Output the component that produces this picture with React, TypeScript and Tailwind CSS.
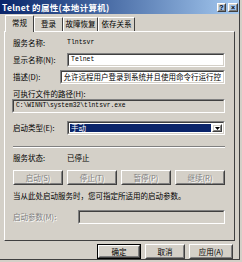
import React from "react";

function Sunken({ className = "", inner = "bg-white", children }: { className?: string; inner?: string; children?: React.ReactNode }) {
  return (
    <div className={`border border-t-[#808080] border-l-[#808080] border-b-white border-r-white ${className}`}>
      <div className={`h-full border border-t-[#404040] border-l-[#404040] border-b-[#d4d0c8] border-r-[#d4d0c8] flex items-center px-[2px] overflow-hidden whitespace-nowrap ${inner}`}>
        {children}
      </div>
    </div>
  );
}

function Raised({ className = "", children, disabled = false }: { className?: string; children?: React.ReactNode; disabled?: boolean }) {
  return (
    <div className={`border border-t-white border-l-white border-b-[#404040] border-r-[#404040] ${className}`}>
      <div
        className={`h-full border border-t-[#d4d0c8] border-l-[#d4d0c8] border-b-[#808080] border-r-[#808080] flex items-center justify-center ${
          disabled ? "text-[#808080] [text-shadow:1px_1px_0_#ffffff]" : "text-black"
        }`}
      >
        {children}
      </div>
    </div>
  );
}

function Tab({ label, selected = false, className = "" }: { label: string; selected?: boolean; className?: string }) {
  if (selected) {
    return (
      <div className={`h-[17px] -mb-[1px] relative z-10 bg-[#d4d0c8] border-t border-l border-t-white border-l-white border-r border-r-[#404040] rounded-t-[1px] flex items-start justify-center pt-[3px] ${className}`}>
        {label}
      </div>
    );
  }
  return (
    <div className={`h-[14px] border-t border-l border-t-white border-l-white border-r border-r-[#404040] rounded-t-[1px] flex items-start justify-center pt-[2px] ${className}`}>
      {label}
    </div>
  );
}

export default function App() {
  return (
    <div className="w-[242px] h-[262px] bg-[#d4d0c8] overflow-hidden font-['Noto_Sans_CJK_SC',sans-serif] text-[7.5px] leading-none text-black">
      <div className="w-[240px] h-[260px] border-r border-b border-r-[#404040] border-b-[#404040] flex flex-col">
        {/* title bar */}
        <div className="h-[14px] w-[239px] flex items-center bg-linear-to-r from-[#0a246a] to-[#a6caf0] pl-[2px] pr-[1px]">
          <span className="text-white font-bold text-[8.5px] tracking-[0.3px]">Telnet 的属性(本地计算机)</span>
          <div className="ml-auto flex gap-[2px]">
            <Raised className="w-[9px] h-[9px]">
              <span className="text-[7px] font-bold font-['Liberation_Sans',sans-serif] leading-none">?</span>
            </Raised>
            <Raised className="w-[10px] h-[9px]">
              <span className="text-[7px] font-bold font-['Liberation_Sans',sans-serif] leading-none">×</span>
            </Raised>
          </div>
        </div>

        {/* tabs */}
        <div className="mt-[1px] h-[16px] flex items-end pl-[5px]">
          <Tab label="常规" selected className="w-[29px]" />
          <Tab label="登录" className="w-[29px]" />
          <Tab label="故障恢复" className="w-[35px]" />
          <Tab label="依存关系" className="w-[37px]" />
        </div>

        {/* panel */}
        <div className="ml-[4px] w-[231px] h-[210px] border border-t-white border-l-white border-b-[#404040] border-r-[#404040] flex flex-col pl-[8px] pr-[9px]">
          <div className="mt-[6px] h-[10px] flex items-center">
            <span className="w-[54px]">服务名称:</span>
            <span className="font-['Liberation_Mono',monospace] text-[6.5px]">Tlntsvr</span>
          </div>

          <div className="mt-[5px] h-[14px] flex items-center">
            <span className="w-[54px]">显示名称(N):</span>
            <Sunken className="flex-1 h-[14px]">
              <span className="font-['Liberation_Mono',monospace] text-[6.5px]">Telnet</span>
            </Sunken>
          </div>

          <div className="mt-[3px] h-[14px] flex items-center">
            <span className="w-[54px]">描述(D):</span>
            <Sunken className="flex-1 h-[14px]">
              <span>允许远程用户登录到系统并且使用命令行运行控</span>
            </Sunken>
          </div>

          <div className="mt-[5px] h-[9px] flex items-center">可执行文件的路径(H):</div>

          <Sunken className="mt-[1px] -ml-[1px] h-[14px]" inner="bg-[#d4d0c8]">
            <span className="font-['Liberation_Mono',monospace] text-[6.3px]">C:\WINNT\system32\tlntsvr.exe</span>
          </Sunken>

          <div className="mt-[8px] h-[14px] flex items-center">
            <span className="w-[54px]">启动类型(E):</span>
            <div className="flex-1 h-[14px] border border-t-[#808080] border-l-[#808080] border-b-white border-r-white">
              <div className="h-full border border-t-[#404040] border-l-[#404040] border-b-[#d4d0c8] border-r-[#d4d0c8] bg-white flex items-stretch p-[1px]">
                <div className="flex-1 bg-[#0a246a] text-white flex items-center pl-[1px]">手动</div>
                <Raised className="w-[10px] ml-[1px]">
                  <svg width="5" height="3" viewBox="0 0 5 3">
                    <path d="M0 0H5L2.5 3Z" fill="#000" />
                  </svg>
                </Raised>
              </div>
            </div>
          </div>

          <div className="mt-[11px] h-[2px] border-t border-t-[#808080] border-b border-b-white" />

          <div className="mt-[5px] h-[10px] flex items-center">
            <span className="w-[54px]">服务状态:</span>
            <span>已停止</span>
          </div>

          <div className="mt-[7px] h-[15px] flex gap-[4px]">
            <Raised className="flex-1" disabled>启动(S)</Raised>
            <Raised className="flex-1" disabled>停止(T)</Raised>
            <Raised className="flex-1" disabled>暂停(P)</Raised>
            <Raised className="flex-1" disabled>继续(R)</Raised>
          </div>

          <div className="mt-[6px] h-[10px] flex items-center whitespace-nowrap">当从此处启动服务时，您可指定所适用的启动参数。</div>

          <div className="mt-[9px] h-[14px] flex items-center">
            <span className="w-[65px] text-[#808080] [text-shadow:1px_1px_0_#ffffff]">启动参数(M):</span>
            <Sunken className="flex-1 h-[14px]" inner="bg-[#d4d0c8]" />
          </div>
        </div>

        {/* bottom buttons */}
        <div className="mt-[3px] h-[15px] flex justify-end gap-[4px] pr-[6px]">
          <div className="border border-black w-[44px]">
            <Raised className="h-full">确定</Raised>
          </div>
          <Raised className="w-[40px]">取消</Raised>
          <Raised className="w-[44px]">应用(A)</Raised>
        </div>
      </div>
    </div>
  );
}
